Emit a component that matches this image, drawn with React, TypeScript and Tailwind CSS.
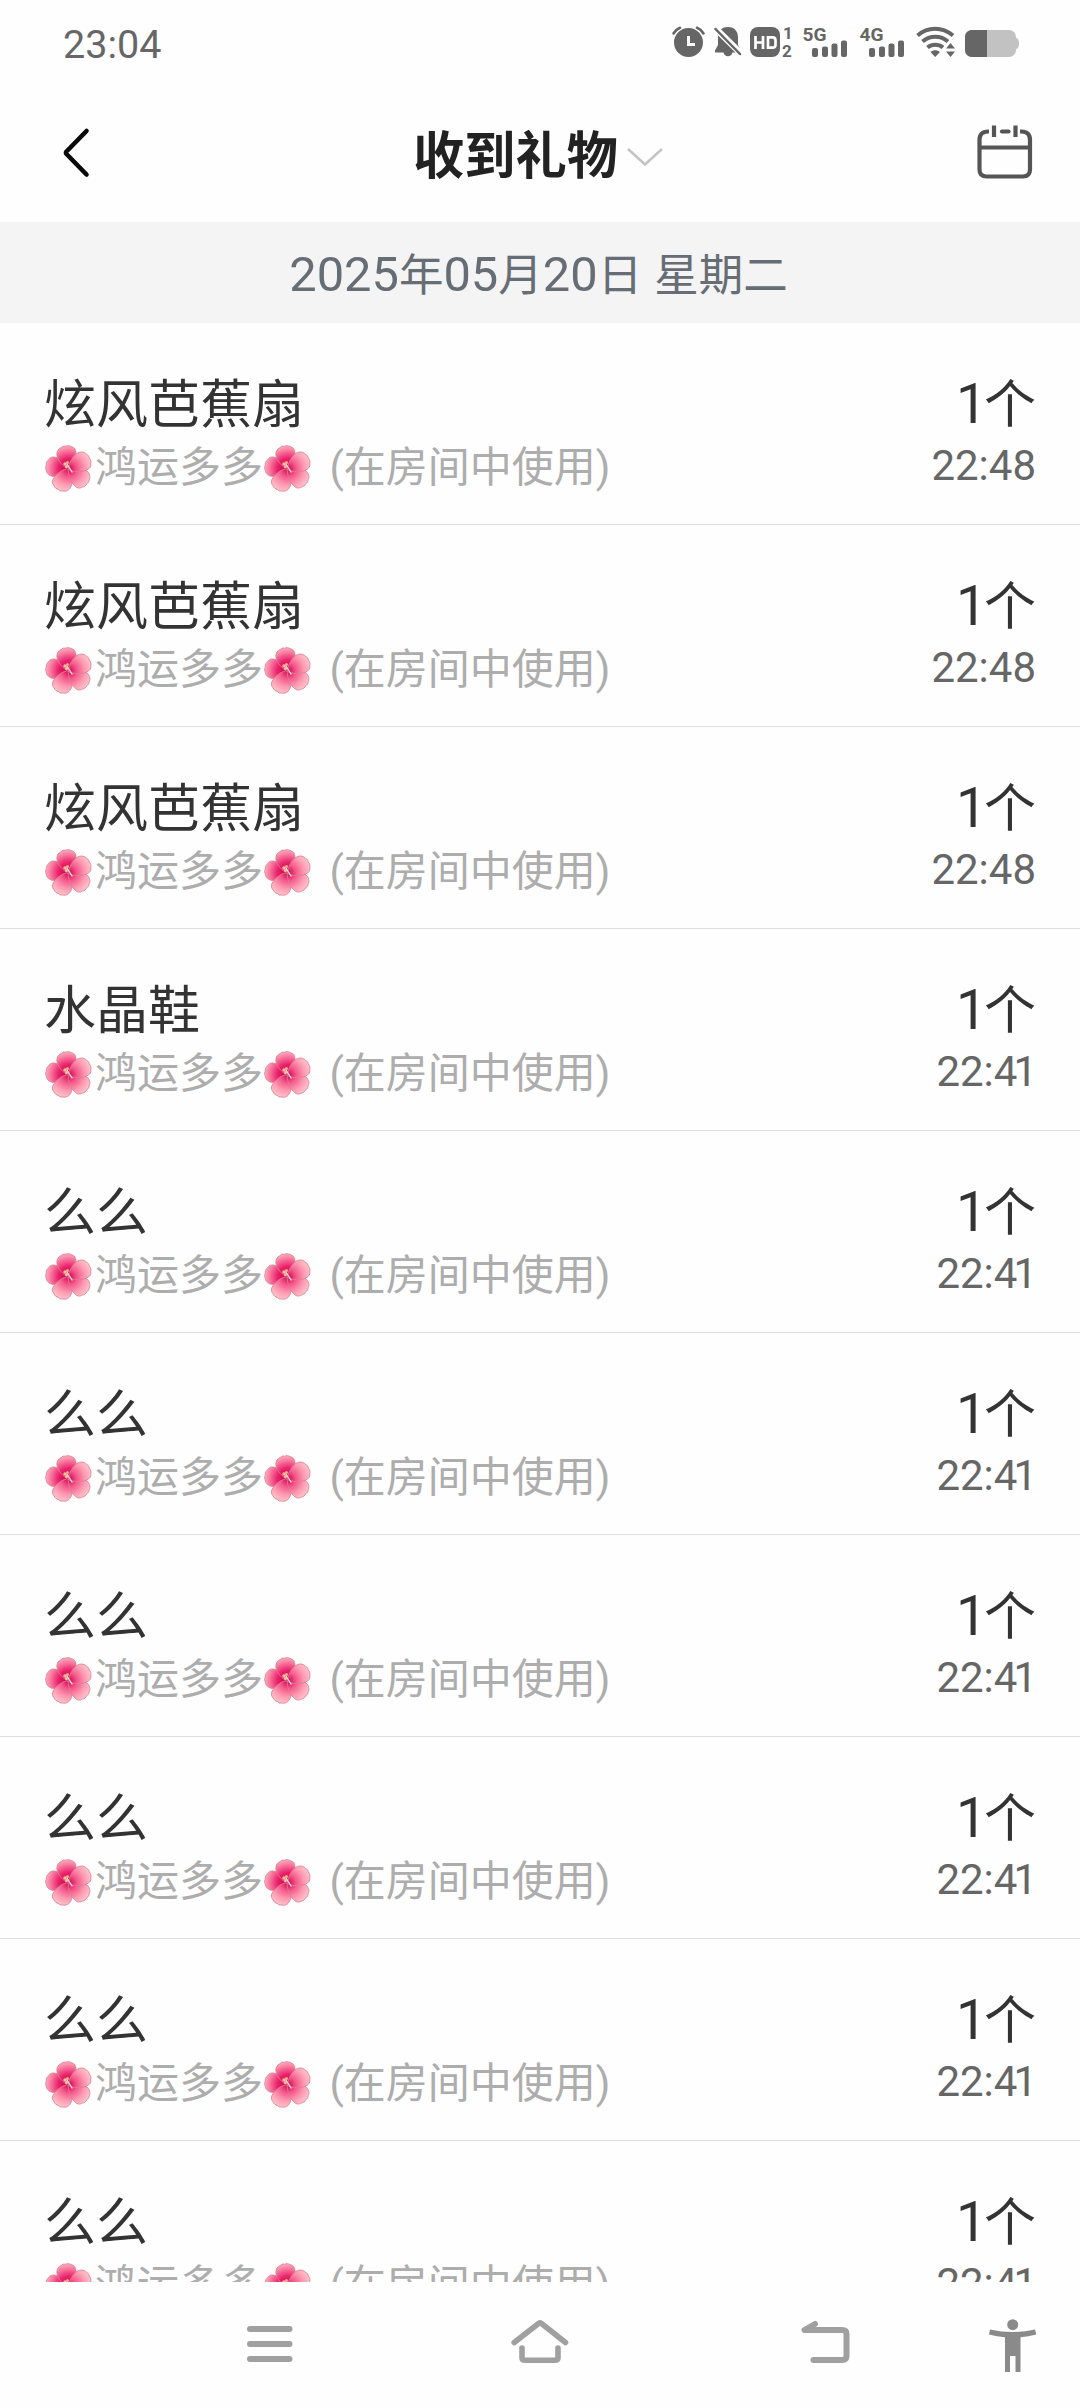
import type { ReactNode } from "react";

const gifts = [
  { id: 1, name: "炫风芭蕉扇", time: "22:48" },
  { id: 2, name: "炫风芭蕉扇", time: "22:48" },
  { id: 3, name: "炫风芭蕉扇", time: "22:48" },
  { id: 4, name: "水晶鞋", time: "22:41" },
  { id: 5, name: "么么", time: "22:41" },
  { id: 6, name: "么么", time: "22:41" },
  { id: 7, name: "么么", time: "22:41" },
  { id: 8, name: "么么", time: "22:41" },
  { id: 9, name: "么么", time: "22:41" },
  { id: 10, name: "么么", time: "22:41" },
];

const petals = [
  { angle: 278, fill: "url(#petal-dark)" },
  { angle: 206, fill: "url(#petal)" },
  { angle: 128, fill: "url(#petal)" },
  { angle: -10, fill: "url(#petal-dark)" },
  { angle: 60, fill: "url(#petal)" },
];

function Hibiscus() {
  return (
    <svg viewBox="0 0 51 50" className="h-[50px] w-[51px] shrink-0">
      <defs>
        <radialGradient id="petal" gradientUnits="userSpaceOnUse" cx="25" cy="26" r="23">
          <stop offset="0" stopColor="#d6004e" />
          <stop offset="0.35" stopColor="#f4588b" />
          <stop offset="0.7" stopColor="#fd9ab2" />
          <stop offset="1" stopColor="#fec3ca" />
        </radialGradient>
        <radialGradient id="petal-dark" gradientUnits="userSpaceOnUse" cx="25" cy="26" r="24">
          <stop offset="0" stopColor="#c20044" />
          <stop offset="0.45" stopColor="#ea226c" />
          <stop offset="0.75" stopColor="#f7739b" />
          <stop offset="1" stopColor="#fdb4c2" />
        </radialGradient>
      </defs>
      {petals.map(({ angle, fill }) => (
        <path
          key={angle}
          d="M25 27C20 23 15 16 15.500 10c.5-4 3-6 5.500-6.500 2-1.200 3-1.200 4.500-.500 2-.700 4 0 5.500 1.300 3 1.200 4.200 3.500 3.700 7C34 17 30.500 23 25 27z"
          transform={`rotate(${angle} 25 26)`}
          fill={fill}
          stroke="#d97f93"
          strokeWidth="0.8"
        />
      ))}
      <path d="M23 21l5 8" stroke="#ffe0e4" strokeWidth="1.4" strokeLinecap="round" />
      <circle cx="21" cy="21" r="1.700" fill="#ffc09a" />
      <circle cx="23.500" cy="19.500" r="1.500" fill="#ffb08e" />
      <circle cx="22.500" cy="23.500" r="1.500" fill="#ffc7a6" />
    </svg>
  );
}

function Signal({ label }: { label: string }) {
  return (
    <svg viewBox="0 0 45 32" className="h-8 w-[45px] overflow-visible" fill="#666">
      <text x="-0.500" y="15" fontSize="19" fontWeight="700" fontFamily="Roboto" textLength="24" lengthAdjust="spacingAndGlyphs">
        {label}
      </text>
      <rect x="9" y="22" width="6" height="9" rx="2" />
      <rect x="19" y="20.500" width="6" height="10.500" rx="2" />
      <rect x="28.500" y="17.500" width="6" height="13.500" rx="2" />
      <rect x="38" y="14.500" width="6" height="16.500" rx="2" />
    </svg>
  );
}

function StatusBar() {
  return (
    <div className="flex h-[88px] items-start justify-between pr-[61px] pl-[63px]">
      <span className="mt-[21.500px] text-[39.500px] leading-[46px] font-[450] text-[#666]">23:04</span>
      <div className="mt-[26px] flex h-8">
        {/* Alarm */}
        <svg viewBox="0 0 33 32" className="h-8 w-[33px]">
          <circle cx="16.500" cy="16.500" r="14.500" fill="#666" />
          <path d="M1.500 7.500C3 5 5 3 8 1.800M31.500 7.500C30 5 28 3 25 1.800" fill="none" stroke="#666" strokeWidth="2.600" strokeLinecap="round" />
          <path d="M16.500 10v8.500h6.500" fill="none" stroke="#fefefe" strokeWidth="3" />
        </svg>
        {/* Muted bell */}
        <svg viewBox="0 0 28 32" className="ml-[9px] h-8 w-7">
          <path d="M14 1C7 1 4 6 4 11v8l-3 5.500v2h8.500c1 5 8 5 9 0H27v-2l-3-5.500v-8C24 6 21 1 14 1z" fill="#666" />
          <path d="M-0.500 0.500L28 28.500" stroke="#fefefe" strokeWidth="6.500" />
          <path d="M1.500 3L26 28" stroke="#666" strokeWidth="2.500" strokeLinecap="round" />
        </svg>
        {/* HD calling, both SIMs */}
        <svg viewBox="0 0 43 32" className="ml-[8px] h-8 w-[43px] overflow-visible">
          <rect x="0" y="1" width="30" height="30" rx="8" fill="#666" />
          <path d="M5.500 10v13M13 10v13M5.500 16.500h7.500M18 11.300h4.500c2 0 3 1 3 3v4.400c0 2-1 3-3 3H18z" fill="none" stroke="#fefefe" strokeWidth="2.700" />
          <text x="33" y="13" fontSize="17" fontWeight="700" fontFamily="Roboto" fill="#666">1</text>
          <text x="32" y="31" fontSize="17" fontWeight="700" fontFamily="Roboto" fill="#666">2</text>
        </svg>
        <div className="ml-[10px] flex gap-[12px]">
          <Signal label="5G" />
          <Signal label="4G" />
        </div>
        {/* Wi-Fi */}
        <svg viewBox="0 0 40 32" className="ml-[11.500px] h-8 w-10">
          <g fill="none" stroke="#666" strokeWidth="4">
            <path d="M1.500 9.500C12 0.500 26 0.500 37 9.500" />
            <path d="M6.500 15.500C14 9 24.500 9 32 15.500" />
            <path d="M11.500 21.500C16 17.700 22.500 17.700 27 21.500" />
          </g>
          <path d="M14.500 26c3-2.300 6.500-2.300 9.500 0L19.200 31zM30 22.500h9L34.500 17zM30 25.500h9L34.500 31z" fill="#666" />
        </svg>
        {/* Battery */}
        <svg viewBox="0 0 54 32" className="ml-[9px] h-8 w-[54px]">
          <rect x="0" y="4" width="51" height="27" rx="7" fill="#c2c2c2" />
          <path d="M51 12c4 0 4 11 0 11z" fill="#c2c2c2" />
          <path d="M7 4h15v27H7c-4 0-7-3-7-7V11c0-4 3-7 7-7z" fill="#666" />
        </svg>
      </div>
    </div>
  );
}

function Header() {
  return (
    <header className="flex h-[134px] items-start justify-between pr-[47px] pl-[62px]">
      <svg viewBox="0 0 28 52" className="mt-[39px] h-[52px] w-7" fill="none" stroke="#0a0a0a" strokeWidth="4.600" strokeLinecap="round" strokeLinejoin="round">
        <path d="M24.500 4L4.500 24.500Q3.500 25.700 4.500 27L24.500 47.500" />
      </svg>
      <h1 className="mt-[33px] ml-[10px] flex items-center text-[51.200px] leading-[72px] font-bold text-[#222]">
        收到礼物
        <svg viewBox="0 0 38 20" className="ml-[8px] h-5 w-[38px]" fill="none" stroke="#c4c4c4" strokeWidth="2.600">
          <path d="M2 2l17 15.500L36 2" />
        </svg>
      </h1>
      <svg viewBox="0 0 56 56" className="mt-[36px] h-14 w-14" fill="none" stroke="#555" strokeWidth="4.200" strokeLinecap="round">
        <path strokeLinecap="butt" d="M12 7.500h-1Q2.500 7.500 2.500 16v29.500Q2.500 52.500 9.500 52.500h36.500Q53 52.500 53 45.500V16Q53 7.500 44.500 7.500h-1.500" />
        <path d="M25 7.500h6.500" />
        <path strokeLinecap="butt" d="M3 23.500h50M17 1.500v11.500M38.500 1.500v11.500" />
      </svg>
    </header>
  );
}

function Num({ children }: { children: ReactNode }) {
  return <span className="text-[48.800px] leading-none font-[450]">{children}</span>;
}

function DateBar() {
  return (
    <div className="h-[101px] bg-[#f4f4f4] pt-[4px] pr-[3px] text-center text-[44.500px] leading-[100px] whitespace-pre text-[#666d74]">
      <Num>2025</Num>年<Num>05</Num>月<Num>20</Num>日<Num> </Num>星期二
    </div>
  );
}

function GiftRow({ name, time }: { name: string; time: string }) {
  // A trailing 1 sits tighter than the other digits
  const tight = time.endsWith("1");

  return (
    <li className="flex h-[202px] justify-between border-b border-[#dfdfdf] pr-[44px] pl-[44px]">
      <div className="flex flex-col pt-[49px]">
        <span className="text-[52px] leading-[68px] text-[#333]">{name}</span>
        <span className="-mt-[1px] flex h-[58px] items-center text-[42px] leading-[58px] whitespace-pre text-[#adadad]">
          <Hibiscus />
          鸿运多多
          <Hibiscus />
          <span className="ml-[5px]">{" (在房间中使用)"}</span>
        </span>
      </div>
      <div className="flex flex-col items-end pt-[49px] text-[#333]">
        <span className="text-[52px] leading-[68px]">
          <span className="mr-[-3px] text-[55px] leading-none font-[450]">1</span>个
        </span>
        <span className="-mt-[1px] text-[42px] leading-[54px] font-[450] text-[#666]">
          {time.slice(0, -1)}
          <span className={tight ? "-mr-px -ml-[4px]" : ""}>{time.slice(-1)}</span>
        </span>
      </div>
    </li>
  );
}

function NavBar() {
  return (
    <nav className="flex h-[126px] shrink-0 items-start pt-[36px] pl-[247px] text-[#a0a0a0]">
      <svg viewBox="0 0 46 46" className="mt-[6px] h-[46px] w-[46px]" stroke="currentColor" strokeWidth="6" strokeLinecap="round">
        <path d="M3 6h39.500M3 21h39.500M3 36h39.500" transform="translate(0 -1)" />
      </svg>
      <svg viewBox="0 0 58 46" className="ml-[218px] h-[46px] w-[58px]" fill="none" stroke="currentColor" strokeWidth="5.600" strokeLinecap="round" strokeLinejoin="round">
        <path d="M3.200 24.500L27.500 5.500Q29 4.400 30.500 5.500L54.500 24.500M11 30v10Q11 42.200 14 42.200h30Q47 42.200 47 40V30" />
      </svg>
      <svg viewBox="0 0 50 46" className="ml-[232px] h-[46px] w-[50px]" fill="none" stroke="currentColor" strokeWidth="6" strokeLinecap="round" strokeLinejoin="round">
        <path d="M14 6L3.500 12H41Q45.500 12 45.500 16V38Q45.500 42 41 42H12.500" />
      </svg>
      <svg viewBox="0 0 48 54" className="ml-[138px] h-[54px] w-12" fill="#8a8a8a">
        <circle cx="23.700" cy="6.700" r="5.500" />
        <path d="M1 11.500Q23.500 16.500 46 11.500L47.300 16.500Q39.500 18.700 31.500 19.300V54H26.500V38H21V54H16V19.300Q8 18.700 0 16.500z" />
      </svg>
    </nav>
  );
}

export default function App() {
  return (
    <div className="flex h-[2408px] w-[1080px] flex-col overflow-hidden bg-[#fefefe] font-[Roboto,'Noto_Sans_CJK_SC',sans-serif]">
      <StatusBar />
      <Header />
      <DateBar />
      <ul className="min-h-0 flex-1 overflow-hidden">
        {gifts.map((gift) => (
          <GiftRow key={gift.id} name={gift.name} time={gift.time} />
        ))}
      </ul>
      <NavBar />
    </div>
  );
}
